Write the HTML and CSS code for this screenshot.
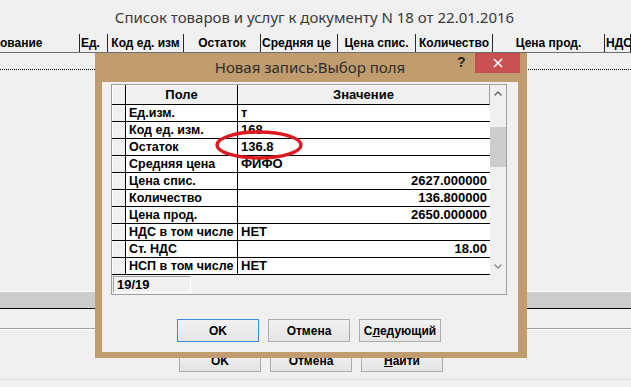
FILE: index.html
```html
<!DOCTYPE html>
<html lang="ru">
<head>
    <meta charset="UTF-8">
    <title>Список товаров и услуг</title>
    <link rel="stylesheet" href="styles.css">
</head>
<body>
    <div class="window">
        <div class="caption">Список товаров и услуг к документу N 18 от 22.01.2016</div>
        <div class="list-head">
            <div class="head-cell first">ование</div>
            <div class="head-cell left">Ед.</div>
            <div class="head-cell">Код ед. изм</div>
            <div class="head-cell">Остаток</div>
            <div class="head-cell left">Средняя це</div>
            <div class="head-cell">Цена спис.</div>
            <div class="head-cell">Количество</div>
            <div class="head-cell">Цена прод.</div>
            <div class="head-cell left">НДС</div>
        </div>
        <div class="focus-row"></div>
        <div class="list-body"></div>
        <div class="hscroll"></div>
        <div class="panel"></div>
        <div class="actions">
            <button class="btn">OK</button>
            <button class="btn">Отмена</button>
            <button class="btn"><u>Н</u>айти</button>
        </div>
        <div class="footer"></div>
    </div>

    <div class="dialog">
        <div class="dialog-title">Новая запись:Выбор поля</div>
        <span class="help">?</span>
        <span class="close">
            <svg width="10" height="10" viewBox="0 0 10 10"><path d="M1 1L9 9M9 1L1 9" stroke="#fff" stroke-width="1.6"/></svg>
        </span>
        <div class="dialog-body">
            <div class="fields">
                <div class="fields-table">
                    <div class="cell ind head"></div>
                    <div class="cell name head">Поле</div>
                    <div class="cell val head">Значение</div>

                    <div class="cell ind"></div><div class="cell name">Ед.изм.</div><div class="cell val">т</div>
                    <div class="cell ind"></div><div class="cell name">Код ед. изм.</div><div class="cell val">168</div>
                    <div class="cell ind"></div><div class="cell name">Остаток</div><div class="cell val">136.8</div>
                    <div class="cell ind"></div><div class="cell name">Средняя цена</div><div class="cell val">ФИФО</div>
                    <div class="cell ind"></div><div class="cell name">Цена спис.</div><div class="cell val num">2627.000000</div>
                    <div class="cell ind"></div><div class="cell name">Количество</div><div class="cell val num">136.800000</div>
                    <div class="cell ind"></div><div class="cell name">Цена прод.</div><div class="cell val num">2650.000000</div>
                    <div class="cell ind"></div><div class="cell name">НДС в том числе</div><div class="cell val">НЕТ</div>
                    <div class="cell ind"></div><div class="cell name">Ст. НДС</div><div class="cell val num">18.00</div>
                    <div class="cell ind"></div><div class="cell name">НСП в том числе</div><div class="cell val">НЕТ</div>
                </div>
                <div class="vscroll">
                    <div class="arrow">
                        <svg width="8" height="5" viewBox="0 0 8 5"><path d="M0.5 4.5L4 1L7.5 4.5" fill="none" stroke="#606060" stroke-width="1.3"/></svg>
                    </div>
                    <div class="track-gap"></div>
                    <div class="thumb"></div>
                    <div class="track-rest"></div>
                    <div class="arrow">
                        <svg width="8" height="5" viewBox="0 0 8 5"><path d="M0.5 0.5L4 4L7.5 0.5" fill="none" stroke="#8a8a8a" stroke-width="1.3"/></svg>
                    </div>
                </div>
            </div>
            <div class="status"><span class="counter">19/19</span></div>
            <div class="dialog-actions">
                <button class="btn default">OK</button>
                <button class="btn">Отмена</button>
                <button class="btn">С<u>л</u>едующий</button>
            </div>
        </div>
    </div>

    <!-- пометка вокруг значения остатка -->
    <svg class="mark" width="96" height="34" viewBox="0 0 96 34">
        <ellipse cx="47" cy="17" rx="42" ry="13" fill="none" stroke="#dc1a20" stroke-width="3.4"/>
    </svg>
</body>
</html>
```

FILE: styles.css
```css
* {
    box-sizing: border-box;
}

body {
    margin: 0;
    width: 631px;
    height: 387px;
    overflow: hidden;
    position: relative;
    background: #f0f0f0;
    color: #000;
    font-family: "Liberation Sans", Arial, sans-serif;
    font-size: 12px;
    font-weight: bold;
}

/* main window */

.caption {
    height: 34px;
    line-height: 34px;
    padding-right: 2px;
    text-align: center;
    font-family: "Noto Sans", "Open Sans", sans-serif;
    font-size: 15px;
    font-weight: normal;
    color: #3a3a3a;
}

.list-head {
    display: grid;
    grid-template-columns: 80px 28px 76px 77px 77px 78px 77px 112px 1fr;
    height: 19px;
    border-bottom: 1px solid #6e6e6e;
}

.head-cell {
    border-right: 1px solid #2a2a2a;
    padding: 0 2px;
    line-height: 18px;
    text-align: center;
    white-space: nowrap;
    overflow: hidden;
}

.head-cell.first {
    padding: 0;
    text-align: left;
}

.head-cell.left {
    padding: 0 1px;
    text-align: left;
}

.focus-row {
    height: 17px;
    border-bottom: 1px dotted #000;
}

.list-body {
    height: 221px;
}

.hscroll {
    height: 18px;
    background: #cdcdcd;
    border-top: 1px solid #fff;
    border-bottom: 1px solid #000;
}

.panel {
    height: 20px;
    border-bottom: 1px solid #a0a0a0;
}

.actions {
    display: flex;
    gap: 9px;
    height: 50px;
    padding: 19px 0 0 179px;
    border-top: 1px solid #fff;
}

.footer {
    border-top: 1px solid #dcdcdc;
}

.btn {
    width: 82px;
    height: 23px;
    padding: 0;
    border: 1px solid #acacac;
    background: linear-gradient(#f2f2f2, #e5e5e5);
    font-family: "Liberation Sans", Arial, sans-serif;
    font-size: 12px;
    font-weight: bold;
    color: #000;
}

.btn.default {
    border-color: #3c8ad8;
}

/* dialog */

.dialog {
    position: absolute;
    left: 95px;
    top: 53px;
    width: 432px;
    height: 305px;
    padding: 0 9px 6px 7px;
    background: #c09c6f;
}

.dialog-title {
    height: 29px;
    line-height: 28px;
    text-align: center;
    font-family: "Noto Sans", "Open Sans", sans-serif;
    font-size: 15px;
    font-weight: normal;
    color: #2e2e2e;
}

.help {
    position: absolute;
    left: 362px;
    top: 1px;
    font-size: 14px;
    color: #222;
}

.close {
    position: absolute;
    right: 7px;
    top: 0;
    width: 45px;
    height: 20px;
    display: flex;
    align-items: center;
    justify-content: center;
    background: #c75050;
}

.dialog-body {
    height: 270px;
    padding: 2px 11px 10px 9px;
    background: #f0f0f0;
    font-size: 13px;
}

.fields {
    display: flex;
    width: 396px;
    border: 1px solid #a0a0a0;
    border-bottom: none;
}

.fields-table {
    display: grid;
    grid-template-columns: 14px 112px 252px;
}

.cell {
    height: 17px;
    padding: 0 3px;
    line-height: 16px;
    white-space: nowrap;
    overflow: hidden;
    background: #fff;
    border-bottom: 1px solid #000;
}

.cell.ind {
    padding: 0;
    background: #f0f0f0;
    border-right: 1px solid #000;
    box-shadow: inset 1px 1px #fff;
}

.cell.name {
    font-size: 12.5px;
    border-right: 1px solid #000;
}

.cell.num {
    text-align: right;
}

.cell.head {
    height: 20px;
    line-height: 19px;
    font-size: 13px;
    text-align: center;
    background: #f0f0f0;
    box-shadow: inset 1px 1px #fff;
}

.cell.val.head {
    border-right: 1px solid #a0a0a0;
}

.vscroll {
    display: flex;
    flex-direction: column;
    width: 16px;
    height: 190px;
    background: #f0f0f0;
}

.arrow {
    height: 17px;
    display: flex;
    align-items: center;
    justify-content: center;
}

.track-gap {
    height: 25px;
}

.thumb {
    height: 40px;
    background: #cdcdcd;
}

.track-rest {
    flex: 1;
}

.status {
    width: 396px;
    height: 20px;
    padding: 1px;
    border: 1px solid #a0a0a0;
    border-top: none;
}

.counter {
    display: block;
    width: 78px;
    height: 17px;
    padding-left: 3px;
    line-height: 16px;
    border: 1px solid;
    border-color: #a0a0a0 #fff #fff #a0a0a0;
}

.dialog-actions {
    display: flex;
    justify-content: center;
    gap: 9px;
    margin-top: 24px;
}

.mark {
    position: absolute;
    left: 212px;
    top: 128px;
}
```
